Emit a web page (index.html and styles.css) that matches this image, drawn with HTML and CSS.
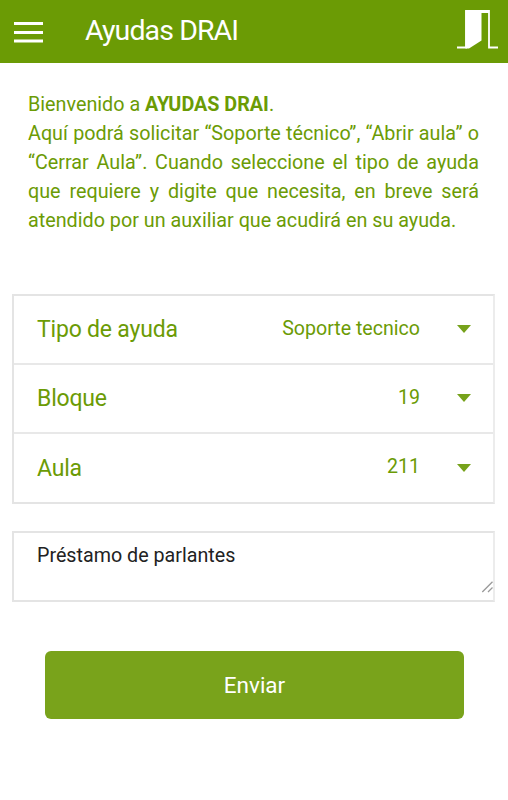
FILE: index.html
```html
<!DOCTYPE html>
<html lang="es">
<head>
    <meta charset="UTF-8">
    <meta name="viewport" content="width=device-width, initial-scale=1.0">
    <title>Ayudas DRAI</title>
    <link rel="stylesheet" href="styles.css">
</head>
<body>
    <header class="navbar">
        <svg class="menu-icon" width="29" height="24" viewBox="0 0 29 24">
            <path d="M0 3.500h29M0 12.500h29M0 21h29" stroke="#fff" stroke-width="3"/>
        </svg>
        <h1 class="title">Ayudas DRAI</h1>
        <svg class="exit-icon" width="42" height="40" viewBox="0 0 42 40">
            <path d="M0 37.500h9V1h23v36.500h9" fill="none" stroke="#fff" stroke-width="1.8"/>
            <path d="M8.500 0.500H32V3H24.500V30.500L12 38.400H8.500z" fill="#fff"/>
        </svg>
    </header>
    <main class="content">
        <p class="welcome">Bienvenido a <b>AYUDAS DRAI</b>.<br>Aquí podrá solicitar “Soporte técnico”, “Abrir aula” o “Cerrar Aula”. Cuando seleccione el tipo de ayuda que requiere y digite que necesita, en breve será atendido por un auxiliar que acudirá en su ayuda.</p>
        <div class="list">
            <div class="item">
                <span class="label">Tipo de ayuda</span>
                <span class="value">Soporte tecnico</span>
                <span class="arrow"></span>
            </div>
            <div class="item">
                <span class="label">Bloque</span>
                <span class="value">19</span>
                <span class="arrow"></span>
            </div>
            <div class="item">
                <span class="label">Aula</span>
                <span class="value">211</span>
                <span class="arrow"></span>
            </div>
        </div>
        <div class="message">
            <span class="message-text">Préstamo de parlantes</span>
            <svg class="grip" width="12" height="12" viewBox="0 0 12 12">
                <path d="M1.300 11L11.500 0.800M7 11L11.500 6.500" stroke="#999" stroke-width="1.300"/>
            </svg>
        </div>
        <button class="send">Enviar</button>
    </main>
</body>
</html>
```

FILE: styles.css
```css
* {
    box-sizing: border-box;
}

body {
    margin: 0;
    background-color: #fff;
    color: #6b9b05;
    font-family: Roboto, sans-serif;
}

/* Top bar */
.navbar {
    display: flex;
    align-items: center;
    height: 63px;
    padding: 0 9px 0 14px;
    background-color: #6b9b05;
}

.title {
    flex: 1;
    margin: 0 0 2px 42px;
    color: #fff;
    font-size: 28.5px;
    font-weight: 400;
    letter-spacing: -0.9px;
}

.exit-icon {
    margin-bottom: 4px;
}

.content {
    padding: 27px 13px 0 12px;
}

.welcome {
    margin: 0 16px 59px;
    font-size: 19.75px;
    line-height: 29px;
    text-align: justify;
}

/* Options */
.list {
    border: 2px solid #e4e4e4;
    border-right-color: #ececec;
}

.item {
    display: flex;
    align-items: center;
    height: 67px;
    padding: 0 22px 0 23px;
}

.item + .item {
    height: 69px;
    border-top: 2px solid #e8e8e8;
}

.item:last-child {
    height: 70px;
}

.label {
    flex: 1;
    font-size: 23px;
    letter-spacing: -0.2px;
}

.value {
    margin: 0 37px 3px 0;
    font-size: 19.6px;
}

.arrow {
    margin-bottom: 1px;
    border-top: 8px solid #76a21b;
    border-left: 7px solid transparent;
    border-right: 7px solid transparent;
}

.message {
    display: flex;
    justify-content: space-between;
    height: 71px;
    margin-top: 27px;
    padding: 11px 0 7px 23px;
    border: 2px solid #e4e4e4;
    border-right-color: #ececec;
}

.message-text {
    color: #222;
    font-size: 19.7px;
}

.grip {
    align-self: flex-end;
}

.send {
    display: block;
    width: 419px;
    height: 68px;
    margin: 49px 0 0 33px;
    border: none;
    border-radius: 6px;
    background-color: #79a31b;
    color: #fff;
    font-family: Roboto, sans-serif;
    font-size: 22.5px;
}
```
